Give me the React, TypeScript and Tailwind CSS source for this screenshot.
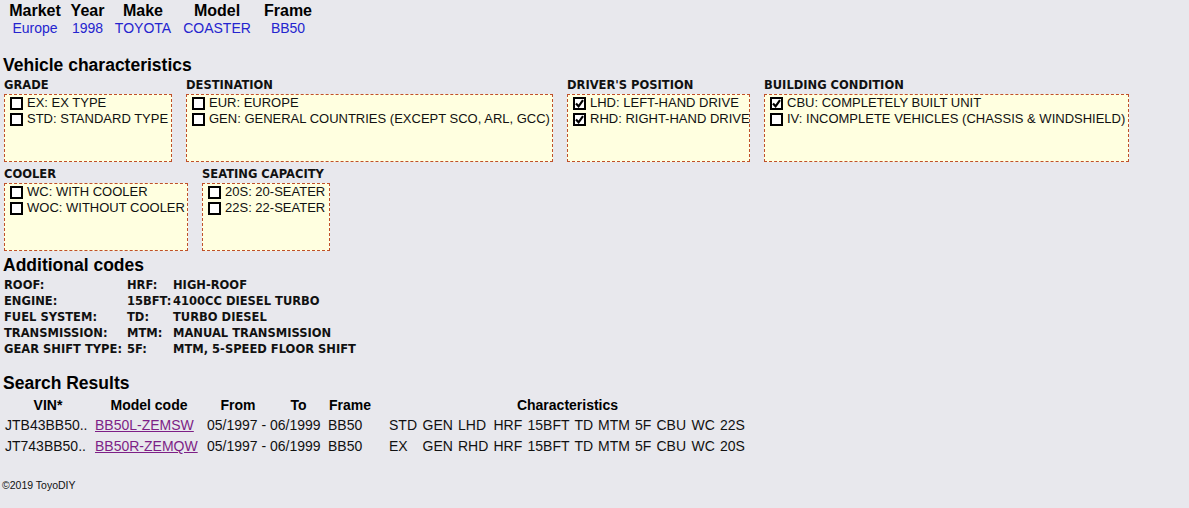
import React from "react";

const arial = { fontFamily: '"Liberation Sans", Arial, sans-serif' };
const dejavu = { fontFamily: '"DejaVu Sans", Verdana, sans-serif' };

type Item = { text: string; checked?: boolean };

function Check({ checked }: { checked?: boolean }) {
  return (
    <span className="ml-[5px] mr-[4px] inline-flex h-[13px] w-[13px] shrink-0 items-center justify-center border-2 border-black bg-white">
      {checked && (
        <svg width="9" height="9" viewBox="0 0 9 9">
          <path d="M1 4.5 L3.6 7.3 L8 1.2" fill="none" stroke="black" strokeWidth="2.2" />
        </svg>
      )}
    </span>
  );
}

function Box({ label, w, items }: { label: string; w: string; items: Item[] }) {
  return (
    <div className="flex flex-col">
      <div className="h-[16px] text-[11.5px] font-bold leading-[15px] text-[#111]" style={dejavu}>
        {label}
      </div>
      <div className={`h-[68px] border border-dashed border-[#c0502a] bg-[#ffffe0] ${w}`}>
        {items.map((it) => (
          <div key={it.text} className="flex h-[16px] items-center text-[13px] text-[#111]" style={arial}>
            <Check checked={it.checked} />
            <span className="whitespace-nowrap">{it.text}</span>
          </div>
        ))}
      </div>
    </div>
  );
}

const codes = [
  ["ROOF:", "HRF:", "HIGH-ROOF"],
  ["ENGINE:", "15BFT:", "4100CC DIESEL TURBO"],
  ["FUEL SYSTEM:", "TD:", "TURBO DIESEL"],
  ["TRANSMISSION:", "MTM:", "MANUAL TRANSMISSION"],
  ["GEAR SHIFT TYPE:", "5F:", "MTM, 5-SPEED FLOOR SHIFT"],
];

const results = [
  {
    vin: "JTB43BB50..",
    code: "BB50L-ZEMSW",
    chars: ["STD", "GEN", "LHD", "HRF", "15BFT", "TD", "MTM", "5F", "CBU", "WC", "22S"],
  },
  {
    vin: "JT743BB50..",
    code: "BB50R-ZEMQW",
    chars: ["EX", "GEN", "RHD", "HRF", "15BFT", "TD", "MTM", "5F", "CBU", "WC", "20S"],
  },
];

export default function App() {
  return (
    <div className="min-h-[508px] w-full bg-[#e8e8ed] text-black" style={arial}>
      {/* top vehicle summary */}
      <div className="ml-[5px] grid grid-cols-[60px_45px_66px_82px_60px] pt-[2px] text-center">
        {["Market", "Year", "Make", "Model", "Frame"].map((h) => (
          <div key={h} className="h-[18px] text-[16px] font-bold leading-[18px]">
            {h}
          </div>
        ))}
        {["Europe", "1998", "TOYOTA", "COASTER", "BB50"].map((v) => (
          <div key={v} className="h-[17px] text-[14px] leading-[17px] text-[#2424cf]">
            {v}
          </div>
        ))}
      </div>

      <div className="ml-[3px] mt-[18px] h-[20px] text-[17.5px] font-bold leading-[20px]">Vehicle characteristics</div>

      <div className="ml-[4px] mt-[3px] flex flex-col gap-[5px]">
        <div className="flex gap-[14px]">
          <Box
            label="GRADE"
            w="w-[168px]"
            items={[{ text: "EX: EX TYPE" }, { text: "STD: STANDARD TYPE" }]}
          />
          <Box
            label="DESTINATION"
            w="w-[367px]"
            items={[{ text: "EUR: EUROPE" }, { text: "GEN: GENERAL COUNTRIES (EXCEPT SCO, ARL, GCC)" }]}
          />
          <Box
            label="DRIVER'S POSITION"
            w="w-[183px]"
            items={[
              { text: "LHD: LEFT-HAND DRIVE", checked: true },
              { text: "RHD: RIGHT-HAND DRIVE", checked: true },
            ]}
          />
          <Box
            label="BUILDING CONDITION"
            w="w-[365px]"
            items={[
              { text: "CBU: COMPLETELY BUILT UNIT", checked: true },
              { text: "IV: INCOMPLETE VEHICLES (CHASSIS & WINDSHIELD)" },
            ]}
          />
        </div>
        <div className="flex gap-[14px]">
          <Box
            label="COOLER"
            w="w-[184px]"
            items={[{ text: "WC: WITH COOLER" }, { text: "WOC: WITHOUT COOLER" }]}
          />
          <Box
            label="SEATING CAPACITY"
            w="w-[128px]"
            items={[{ text: "20S: 20-SEATER" }, { text: "22S: 22-SEATER" }]}
          />
        </div>
      </div>

      <div className="ml-[3px] mt-[4px] h-[20px] text-[17.5px] font-bold leading-[20px]">Additional codes</div>
      <div
        className="ml-[4px] mt-[2px] grid grid-cols-[123px_46px_auto] text-[11.5px] font-bold leading-[16px] text-[#111]"
        style={dejavu}
      >
        {codes.map(([a, b, c]) => (
          <React.Fragment key={a}>
            <div className="whitespace-nowrap">{a}</div>
            <div className="whitespace-nowrap">{b}</div>
            <div className="whitespace-nowrap">{c}</div>
          </React.Fragment>
        ))}
      </div>

      <div className="ml-[3px] mt-[16px] h-[20px] text-[17.5px] font-bold leading-[20px]">Search Results</div>
      <div className="ml-[3px] mt-[1px] grid grid-cols-[90px_112px_66px_55px_48px_13px_361px] text-[14px]">
        <div className="h-[21px] pt-[1px] text-center font-bold leading-[20px]">VIN*</div>
        <div className="h-[21px] pt-[1px] text-center font-bold leading-[20px]">Model code</div>
        <div className="h-[21px] pt-[1px] text-center font-bold leading-[20px]">From</div>
        <div className="h-[21px] pt-[1px] text-center font-bold leading-[20px]">To</div>
        <div className="h-[21px] pt-[1px] text-center font-bold leading-[20px]">Frame</div>
        <div />
        <div className="h-[21px] pt-[1px] text-center font-bold leading-[20px]">Characteristics</div>
        {results.map((r) => (
          <React.Fragment key={r.vin}>
            <div className="h-[21px] whitespace-nowrap pl-[2px] leading-[21px] text-[#111]">{r.vin}</div>
            <div className="h-[21px] whitespace-nowrap pl-[2px] leading-[21px]">
              <span className="text-[#7d1f86] underline">{r.code}</span>
            </div>
            <div className="col-span-2 h-[21px] whitespace-nowrap pl-[2px] leading-[21px] text-[#111]">
              05/1997 - 06/1999
            </div>
            <div className="h-[21px] whitespace-nowrap pl-[2px] leading-[21px] text-[#111]">BB50</div>
            <div />
            <div className="grid h-[21px] grid-cols-[33.5px_35.5px_35.5px_34px_47px_23.5px_37px_21.5px_35px_28.5px_26px] whitespace-nowrap pl-[2px] leading-[21px] text-[#111]">
              {r.chars.map((c, i) => (
                <span key={i}>{c}</span>
              ))}
            </div>
          </React.Fragment>
        ))}
      </div>

      <div className="ml-[2px] mt-[21px] text-[10.5px] leading-[14px] text-[#111]">©2019 ToyoDIY</div>
    </div>
  );
}
